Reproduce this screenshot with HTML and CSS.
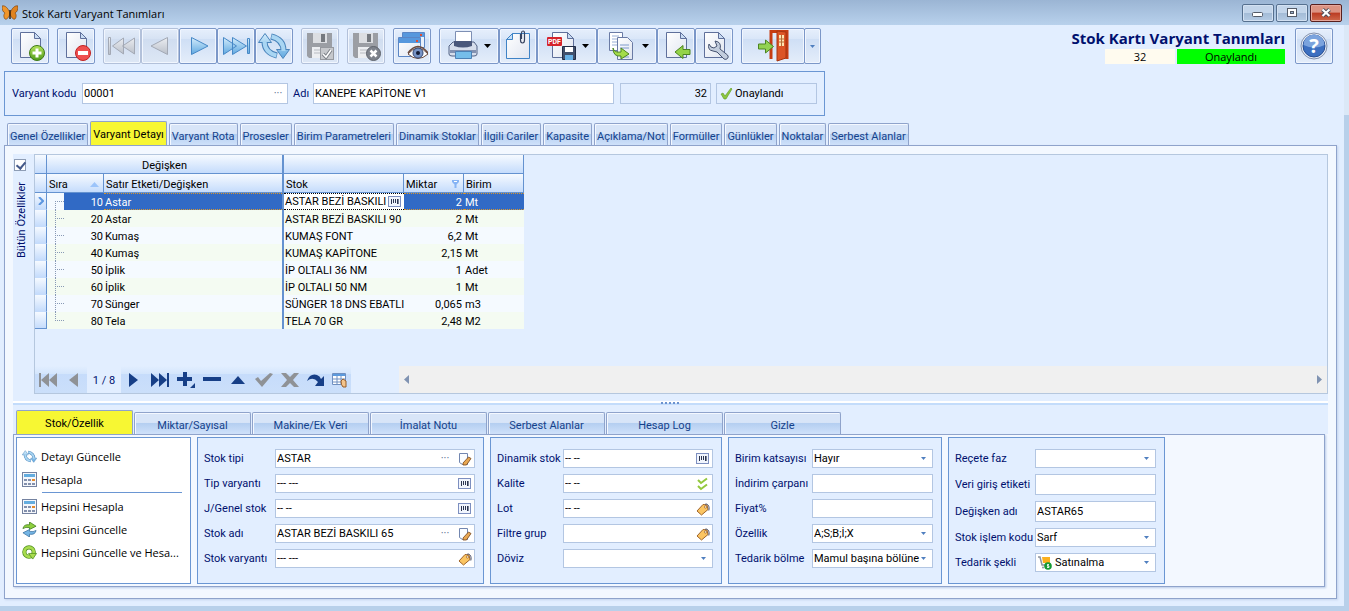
FILE: index.html
```html
<!DOCTYPE html>
<html lang="tr">
<head>
  <meta charset="UTF-8" />
  <meta name="viewport" content="width=device-width, initial-scale=1.0"/>
  <title>Stok Kartı Varyant Tanımları</title>
  <link rel="stylesheet" href="styles.css">
</head>
<body>
  <!-- shared icons -->
  <svg class="defs" aria-hidden="true">
    <defs>
      <linearGradient id="blue" x1="0" y1="0" x2="0" y2="1"><stop offset="0" stop-color="#d3ecfb"/><stop offset="1" stop-color="#5fa8e0"/></linearGradient>
      <linearGradient id="grey" x1="0" y1="0" x2="0" y2="1"><stop offset="0" stop-color="#eceef2"/><stop offset="1" stop-color="#b9bfc9"/></linearGradient>
      <linearGradient id="paper" x1="0" y1="0" x2="1" y2="1"><stop offset="0" stop-color="#fff"/><stop offset="1" stop-color="#dfe5f0"/></linearGradient>
      <linearGradient id="green" x1="0" y1="0" x2="0" y2="1"><stop offset="0" stop-color="#b5e55c"/><stop offset="1" stop-color="#4f9a1b"/></linearGradient>
    </defs>
    <symbol id="i-doc" viewBox="0 0 32 32"><path d="M6.500 2.500h14l6 6v19h-20z" fill="url(#paper)" stroke="#5f709b"/><path d="M20.500 2.500v6h6z" fill="#c9dcf3" stroke="#5f709b"/></symbol>
    <symbol id="i-floppy" viewBox="0 0 32 32"><path d="M3 3h25v25H5l-2-2z" fill="#9b9ea4"/><path d="M9 3h14v10H9z" fill="#dcdee2"/><path d="M17 4h4v8h-4z" fill="#75797f"/><path d="M8 17h16v11H8z" fill="#eceef1"/><path d="M10 20h11M10 23h11" stroke="#b8bbc1"/></symbol>
    <symbol id="i-bar" viewBox="0 0 14 12"><rect x=".5" y=".5" width="12" height="10" fill="#f1f5fd" stroke="#7d8fc0"/><path d="M3.500 3v5M5.500 3v4M7.500 3v4M9.500 3v5" stroke="#2c3550"/><path d="M10.500 3v5" stroke="#2c3550" stroke-width=".6"/></symbol>
    <symbol id="i-edit" viewBox="0 0 14 14"><path d="M1.500 1.500h8v11h-5l-3-2z" fill="#fbfdff" stroke="#7286b0"/><path d="M5 11l5.500-6 2.500 1.500-4.500 6.500H5z" fill="#e8a752" stroke="#744318" stroke-width=".8"/></symbol>
    <symbol id="i-tag" viewBox="0 0 14 14"><path d="M1 9l6-6.500 4 .5 1 4.500L5.500 13z" fill="#fbc562" stroke="#a0642a"/><circle cx="9.500" cy="5" r="1.100" fill="#fff" stroke="#8a4c12" stroke-width=".6"/><path d="M9 2.500c2-1.500 5 1 3.800 6" fill="none" stroke="#444b66"/></symbol>
    <symbol id="i-dd" viewBox="0 0 7 4"><path d="M0 0h7L3.500 4z" fill="currentColor"/></symbol>
    <symbol id="i-calc" viewBox="0 0 15 15"><rect x=".5" y=".5" width="14" height="14" fill="#f5f7fb" stroke="#7482a0"/><path d="M2 2h11v3H2z" fill="#64addf"/><path d="M2 7h3v2H2zM6 7h3v2H6zM2 11h3v2H2zM6 11h3v2H6zM10 11h3v2h-3z" fill="#8390ac"/><path d="M10 7h3v2h-3z" fill="#e58a2c"/></symbol>
    <symbol id="i-sync" viewBox="0 0 32 32">
      <path d="M6.500 11.500q0 11 12.500 14M25.500 20.500q0-11-12.500-14" fill="none" stroke="#4a84bb" stroke-width="6"/>
      <path d="M7 3.500L.5 12.500h13zM25 28.500l6.500-9h-13z" fill="url(#blue)" stroke="#4a84bb"/>
      <path d="M6.500 11q0 11.500 11.900 14.500M25.500 21q0-11.500-11.900-14.500" fill="none" stroke="#a9d6f3" stroke-width="4"/>
    </symbol>
  </svg>

  <header class="titlebar">
    <svg class="logo" viewBox="0 0 16 16"><path d="M8 8C6 3 3 0 0 1c0 4 1 6 3 7-2 2-1 5 0 6 2 1 4-2 5-5z" fill="#f0962c" stroke="#6d3609" stroke-width=".6"/><path d="M8 8c2-5 5-8 8-7 0 4-1 6-3 7 2 2 1 5 0 6-2 1-4-2-5-5z" fill="#e08320" stroke="#6d3609" stroke-width=".6"/><path d="M8 5v9" stroke="#3d2208" stroke-width="1.500"/></svg>
    <h1>Stok Kartı Varyant Tanımları</h1>
    <div class="winbtns">
      <button aria-label="Küçült"><svg viewBox="0 0 30 16"><rect x="9.500" y="7.500" width="10" height="4" rx="1" fill="#fff" stroke="#545b68"/></svg></button>
      <button aria-label="Büyüt"><svg viewBox="0 0 30 16"><rect x="10.500" y="3.500" width="9" height="8" fill="#fff" stroke="#545b68"/><rect x="13.500" y="6.500" width="3" height="2" fill="#9db3ce" stroke="#545b68"/></svg></button>
      <button class="close" aria-label="Kapat"><svg viewBox="0 0 30 16"><path d="M11.500 4.500l7 6.500m0-6.500l-7 6.500" stroke="#4c4e5b" stroke-width="4"/><path d="M11.500 4.500l7 6.500m0-6.500l-7 6.500" stroke="#fff" stroke-width="2.200"/></svg></button>
    </div>
  </header>

  <main class="window">
    <div class="toolbar">
      <div class="group"><button class="tool" aria-label="Yeni"><svg viewBox="0 0 32 32"><use href="#i-doc"/><circle cx="23" cy="23" r="7.500" fill="url(#green)" stroke="#3f7a16"/><path d="M23 18.500v9M18.500 23h9" stroke="#fff" stroke-width="3"/></svg></button></div>
      <div class="group"><button class="tool" aria-label="Sil"><svg viewBox="0 0 32 32"><use href="#i-doc"/><circle cx="23" cy="23" r="7.500" fill="#ef4f4f" stroke="#c02222"/><path d="M18 23h10" stroke="#fff" stroke-width="4"/></svg></button></div>
      <div class="group">
        <button class="tool off" aria-label="İlk"><svg viewBox="0 0 32 32"><path d="M2.500 7.500h2v17h-2zM17.500 8v16L6.500 16zM28.500 8v16l-12-8z" fill="url(#grey)" stroke="#a3a9b5"/></svg></button>
        <button class="tool off" aria-label="Önceki"><svg viewBox="0 0 32 32"><path d="M23.500 7.500v17L7 16z" fill="url(#grey)" stroke="#a3a9b5"/></svg></button>
        <button class="tool" aria-label="Sonraki"><svg viewBox="0 0 32 32"><path d="M9.500 7.500v17L26 16z" fill="url(#blue)" stroke="#4788c6"/></svg></button>
        <button class="tool" aria-label="Son"><svg viewBox="0 0 32 32"><path d="M3.500 7.500v17l13-8.500zM12.500 7.500v17l14-8.500zM27.500 8.500h2v15h-2z" fill="url(#blue)" stroke="#4788c6"/></svg></button>
        <button class="tool" aria-label="Yenile"><svg viewBox="0 0 32 32"><use href="#i-sync"/></svg></button>
      </div>
      <div class="group"><button class="tool off" aria-label="Kaydet"><svg viewBox="0 0 32 32"><use href="#i-floppy"/><rect x="16.500" y="17.500" width="13" height="12" fill="#c6c8cc" stroke="#96999f"/><path d="M19 24l3 3 5-7" fill="none" stroke="#7d8188" stroke-width="3.500"/><path d="M19 24l3 3 5-7" fill="none" stroke="#fff" stroke-width="1.500"/></svg></button></div>
      <div class="group"><button class="tool off" aria-label="Vazgeç"><svg viewBox="0 0 32 32"><use href="#i-floppy"/><circle cx="23.500" cy="23.500" r="7" fill="#7e838c" stroke="#5f646d"/><path d="M20.500 20.500l6 6m0-6l-6 6" stroke="#fff" stroke-width="2.500"/></svg></button></div>
      <div class="group"><button class="tool" aria-label="Görünüm"><svg viewBox="0 0 32 32"><path d="M6.500 2.500h22v15h-22z" fill="#e9f0fa" stroke="#5b86c5"/><path d="M7 3h21v4H7z" fill="#5798dd"/><path d="M2.500 7.500h22v19h-22z" fill="url(#paper)" stroke="#5b86c5"/><path d="M3 8h21v5H3z" fill="#5798dd"/><path d="M24 4h2v2h-2zM20 10h2v2h-2z" fill="#e54c2c"/><path d="M12 24q10-12 20 0-10 9-20 0z" fill="#fff" stroke="#6b4b3f"/><circle cx="22" cy="23" r="5" fill="#7793c5" stroke="#344873"/><circle cx="22" cy="23" r="2" fill="#131b34"/><path d="M12 23q10-13 20 0" fill="none" stroke="#6b4b3f" stroke-width="1.500"/></svg></button></div>
      <div class="group">
        <button class="tool wide" aria-label="Yazdır"><svg viewBox="0 0 32 32"><path d="M8.500 1.500h16v12h-16z" fill="#fff" stroke="#7d8fb4"/><path d="M6 12h21l3 4v8q0 2-3 2H5q-3 0-3-2v-8z" fill="#d6deec" stroke="#536385"/><path d="M7 11h18v5q-9 3-18 0z" fill="#4a587b"/><path d="M3 20h26v3H3z" fill="#8291b1"/><path d="M8.500 21.500h16v7h-16z" fill="#75bdea" stroke="#4b81b6"/></svg><svg class="caret"><use href="#i-dd"/></svg></button>
        <button class="tool" aria-label="Ekle"><svg viewBox="0 0 32 32"><path d="M10.500 3.500h17v25h-23v-19z" fill="url(#paper)" stroke="#3f83c6"/><path d="M10.500 3.500v6h-6z" fill="#c4def5" stroke="#3f83c6"/><path d="M18.500 4v6q0 3 2 3t2-3V3q0-2-1.500-2t-1.500 2v6" fill="none" stroke="#36435f" stroke-width="1.200"/></svg></button>
        <button class="tool wide" aria-label="PDF kaydet"><svg viewBox="0 0 32 32"><path d="M7.500 2.500h15l6 6v19h-21z" fill="url(#paper)" stroke="#5f709b"/><path d="M22.500 2.500v6h6z" fill="#c9dcf3" stroke="#5f709b"/><rect x="2" y="7" width="15" height="9" rx="1" fill="#d5232b"/><text x="3" y="14" class="pdf">PDF</text><path d="M17.500 16.500h13v13h-13z" fill="#41506c" stroke="#202c46"/><path d="M20 17h8v5h-8z" fill="#fff"/><path d="M20 25h8v5h-8z" fill="#67b1e6"/></svg><svg class="caret"><use href="#i-dd"/></svg></button>
        <button class="tool wide" aria-label="Aktar"><svg viewBox="0 0 32 32"><path d="M4.500 2.500h13v18h-13z" fill="#fff" stroke="#6a7ba5"/><path d="M7 6h7M7 9h7M7 12h7M7 15h7" stroke="#9ab0d6"/><path d="M12.500 7.500h10l5 5v17h-15z" fill="url(#paper)" stroke="#6a7ba5"/><path d="M15 15h9M15 18h9M15 27h9" stroke="#7f9acb"/><path d="M8 18q1 5 8 4v-4l8 6-8 5v-3Q8 27 8 18z" fill="#a4dc4a" stroke="#4c8521"/></svg><svg class="caret"><use href="#i-dd"/></svg></button>
        <button class="tool" aria-label="Geri al"><svg viewBox="0 0 32 32"><use href="#i-doc"/><path d="M15 22l8-6.500v4h7v5h-7v4z" fill="#94d348" stroke="#4c8521"/></svg></button>
        <button class="tool" aria-label="Ayarlar"><svg viewBox="0 0 32 32"><use href="#i-doc"/><path d="M11 14q-2 6 4 7l4 1 7 7q2 1 3.500-.5t0-3.500L22 19q2-7-5-8l2 5-3 2-3-1z" fill="#c2cddd" stroke="#45526f"/></svg></button>
      </div>
      <div class="group">
        <button class="tool exit" aria-label="Çıkış"><svg viewBox="0 0 32 32"><path d="M14 29V1.500h16V29" fill="none" stroke="#c63c12" stroke-width="3"/><path d="M20 1l9 1v26l-9 3z" fill="#dc5425" stroke="#a63410"/><path d="M22 5h5v11h-5z" fill="#ffe3b0"/><path d="M22 9h5M22 12h5M24.500 5v11" stroke="#b46a35"/><path d="M1.500 14h7v-4l8 6.500-8 6.500v-4h-7z" fill="#92d252" stroke="#4c8521"/></svg></button>
        <button class="tool slim" aria-label="Çıkış seçenekleri"><svg class="caret blue"><use href="#i-dd"/></svg></button>
      </div>
      <div class="heading">
        <h2>Stok Kartı Varyant Tanımları</h2>
        <div class="status"><span class="num">32</span><span class="ok">Onaylandı</span></div>
      </div>
      <button class="tool" aria-label="Yardım"><svg viewBox="0 0 32 32"><circle cx="16" cy="16" r="13" fill="#e8edf5" stroke="#8291ad"/><circle cx="16" cy="16" r="11" fill="#3c6fc0" stroke="#264d92"/><path d="M5.500 15a10.500 10.500 0 0 1 21 0q-10 5-21 0z" fill="#7ba3dd"/><text x="16" y="23" class="q">?</text></svg></button>
    </div>

    <form class="head-panel">
      <label for="kod">Varyant kodu</label>
      <div class="field kod"><input id="kod" value="00001"><button type="button" class="dots">···</button></div>
      <label for="adi">Adı</label>
      <div class="field adi"><input id="adi" value="KANEPE KAPİTONE V1"></div>
      <div class="field ro no"><input aria-label="No" value="32" readonly></div>
      <div class="field ro durum"><svg viewBox="0 0 13 13"><path d="M1 7l2-1 2 3 6-8 1 1-6 10H4z" fill="#8cc63f" stroke="#5c9a23" stroke-width=".6"/></svg><input aria-label="Durum" value="Onaylandı" readonly></div>
    </form>

    <nav class="tabs top">
      <a href="#">Genel Özellikler</a><a href="#" class="active">Varyant Detayı</a><a href="#">Varyant Rota</a><a href="#">Prosesler</a><a href="#">Birim Parametreleri</a><a href="#">Dinamik Stoklar</a><a href="#">İlgili Cariler</a><a href="#">Kapasite</a><a href="#">Açıklama/Not</a><a href="#">Formüller</a><a href="#">Günlükler</a><a href="#">Noktalar</a><a href="#">Serbest Alanlar</a>
    </nav>

    <section class="page">
      <div class="upper">
        <div class="side">
          <input type="checkbox" id="all" checked>
          <label for="all">Bütün Özellikler</label>
        </div>
        <div class="grid">
          <table>
            <colgroup><col class="c-ind"><col class="c-sira"><col class="c-satir"><col class="c-stok"><col class="c-miktar"><col class="c-birim"></colgroup>
            <thead>
              <tr><th></th><th colspan="2" class="band split">Değişken</th><th colspan="3"></th></tr>
              <tr><th></th><th><span class="th">Sıra<svg class="sort" viewBox="0 0 9 5"><path d="M0 5l4.500-5L9 5z" fill="#9cc4fa"/></svg></span></th><th class="split">Satır Etketi/Değişken</th><th>Stok</th><th><span class="th">Miktar<svg class="funnel" viewBox="0 0 7 8"><path d="M0 0h7v2L4.500 4.500V8h-2V4.500L0 2z" fill="#86b4f5"/><path d="M2 1.500h3" stroke="#fff"/></svg></span></th><th>Birim</th></tr>
            </thead>
            <tbody>
              <tr class="sel"><th class="ind"><svg viewBox="0 0 6 8"><path d="M1 0l4 4-4 4" fill="none" stroke="#5c96e0" stroke-width="2"/></svg></th><td><div class="seq"><i></i><b>10</b></div></td><td class="split">Astar</td><td class="edit"><div class="cell">ASTAR BEZİ BASKILI<svg class="bar"><use href="#i-bar"/></svg></div></td><td class="n">2</td><td>Mt</td></tr>
              <tr><th class="ind"></th><td><div class="seq"><i></i><b>20</b></div></td><td class="split">Astar</td><td>ASTAR BEZİ BASKILI 90</td><td class="n">2</td><td>Mt</td></tr>
              <tr><th class="ind"></th><td><div class="seq"><i></i><b>30</b></div></td><td class="split">Kumaş</td><td>KUMAŞ FONT</td><td class="n">6,2</td><td>Mt</td></tr>
              <tr><th class="ind"></th><td><div class="seq"><i></i><b>40</b></div></td><td class="split">Kumaş</td><td>KUMAŞ KAPİTONE</td><td class="n">2,15</td><td>Mt</td></tr>
              <tr><th class="ind"></th><td><div class="seq"><i></i><b>50</b></div></td><td class="split">İplik</td><td>İP OLTALI 36 NM</td><td class="n">1</td><td>Adet</td></tr>
              <tr><th class="ind"></th><td><div class="seq"><i></i><b>60</b></div></td><td class="split">İplik</td><td>İP OLTALI 50 NM</td><td class="n">1</td><td>Mt</td></tr>
              <tr><th class="ind"></th><td><div class="seq"><i></i><b>70</b></div></td><td class="split">Sünger</td><td>SÜNGER 18 DNS EBATLI</td><td class="n">0,065</td><td>m3</td></tr>
              <tr class="last"><th class="ind"></th><td><div class="seq"><i></i><b>80</b></div></td><td class="split">Tela</td><td>TELA 70 GR</td><td class="n">2,48</td><td>M2</td></tr>
            </tbody>
          </table>
          <div class="grid-foot">
            <div class="navi off">
              <button aria-label="İlk kayıt"><svg viewBox="0 0 20 16"><path d="M1 1h2v14H1zM11 1v14L3 8zM19 1v14l-8-7z"/></svg></button>
              <button aria-label="Önceki kayıt"><svg viewBox="0 0 20 16"><path d="M14 1v14L5 8z"/></svg></button>
            </div>
            <span class="count">1 / 8</span>
            <div class="navi">
              <button aria-label="Sonraki kayıt"><svg viewBox="0 0 20 16"><path d="M5 1v14l9-7z"/></svg></button>
              <button aria-label="Son kayıt"><svg viewBox="0 0 20 16"><path d="M1 1v14l8-7zM9 1v14l8-7zM17 1h2v14h-2z"/></svg></button>
              <button aria-label="Ekle"><svg viewBox="0 0 20 16"><path d="M7 0h4v5h5v4h-5v5H7V9H1V5h6zM19 11v5h-5z"/></svg></button>
              <button aria-label="Çıkar"><svg viewBox="0 0 20 16"><path d="M1 5h18v4H1z"/></svg></button>
              <button aria-label="Düzenle"><svg viewBox="0 0 20 16"><path d="M3 12l7-8 7 8z"/></svg></button>
              <button class="dim" aria-label="Onayla"><svg viewBox="0 0 20 16"><path d="M1 7l3-2 3 4 9-8 3 1L8 15z"/></svg></button>
              <button class="dim" aria-label="İptal"><svg viewBox="0 0 20 16"><path d="M1 1h5l4 4 4-4h5l-6 7 6 7h-5l-4-4-4 4H1l6-7z"/></svg></button>
              <button aria-label="Tazele"><svg viewBox="0 0 20 16"><path d="M1 9q3-8 10-6 3 1 4 4l3-3v10H9l3-4Q7 4 1 9z"/></svg></button>
              <button class="table-btn" aria-label="Tablo"><svg viewBox="0 0 20 16"><path d="M2.500 1.500h13v11h-13z" fill="#fff" stroke="#6f8fc0"/><path d="M3 2h12v2H3z" fill="#5c9add"/><path d="M3 7h12M3 10h12M7 4v8M11 4v8" stroke="#6f8fc0"/><path d="M11 9l2-2 3 2v6h-3q-2-2-2-6z" fill="#f3c48c" stroke="#965c29"/></svg></button>
            </div>
            <div class="scroll"><svg viewBox="0 0 5 9"><path d="M5 0v9L0 4.500z" fill="#8093b2"/></svg><svg viewBox="0 0 5 9"><path d="M0 0v9l5-4.500z" fill="#8093b2"/></svg></div>
          </div>
        </div>
      </div>

      <div class="splitter"><span></span></div>

      <nav class="tabs sub">
        <a href="#" class="active">Stok/Özellik</a><a href="#">Miktar/Sayısal</a><a href="#">Makine/Ek Veri</a><a href="#">İmalat Notu</a><a href="#">Serbest Alanlar</a><a href="#">Hesap Log</a><a href="#">Gizle</a>
      </nav>

      <div class="detail">
        <ul class="actions">
          <li><a href="#"><svg viewBox="0 0 32 32"><use href="#i-sync"/></svg><span>Detayı Güncelle</span></a></li>
          <li><a href="#"><svg><use href="#i-calc"/></svg><span>Hesapla</span></a></li>
          <li class="sep"></li>
          <li><a href="#"><svg><use href="#i-calc"/></svg><span>Hepsini Hesapla</span></a></li>
          <li><a href="#"><svg viewBox="0 0 16 16"><path d="M1 7q1-5 7-4V0l7 4.500L8 8V6Q4 5 1 7z" fill="#8ecf3e" stroke="#3e7a18" stroke-width=".8"/><path d="M15 9q-1 5-7 4v3l-7-4.500L8 8v2q4 1 7-1z" fill="#74b5e5" stroke="#39709f" stroke-width=".8"/></svg><span>Hepsini Güncelle</span></a></li>
          <li><a href="#"><svg viewBox="0 0 16 16"><circle cx="7.500" cy="7.500" r="5" fill="none" stroke="#4f8f1d" stroke-width="4.500"/><circle cx="7.500" cy="7.500" r="5" fill="none" stroke="#a9dc4f" stroke-width="3"/><path d="M7 9h8.500l-4 6z" fill="#a9dc4f" stroke="#4f8f1d" stroke-width=".8"/></svg><span>Hepsini Güncelle ve Hesa...</span></a></li>
        </ul>

        <form class="box b1">
          <label for="f1">Stok tipi</label><div class="field"><input id="f1" value="ASTAR"><button type="button" class="dots">···</button><svg class="edit-i"><use href="#i-edit"/></svg></div>
          <label for="f2">Tip varyantı</label><div class="field"><input id="f2" value="--- ---"><svg class="bar"><use href="#i-bar"/></svg></div>
          <label for="f3">J/Genel stok</label><div class="field"><input id="f3" value="-- --"><svg class="bar"><use href="#i-bar"/></svg></div>
          <label for="f4">Stok adı</label><div class="field"><input id="f4" value="ASTAR BEZİ BASKILI 65"><button type="button" class="dots">···</button><svg class="edit-i"><use href="#i-edit"/></svg></div>
          <label for="f5">Stok varyantı</label><div class="field"><input id="f5" value="--- ---"><svg class="edit-i"><use href="#i-tag"/></svg></div>
        </form>

        <form class="box b2">
          <label for="g1">Dinamik stok</label><div class="field"><input id="g1" value="-- --"><svg class="bar"><use href="#i-bar"/></svg></div>
          <label for="g2">Kalite</label><div class="field"><input id="g2" value="-- --"><svg class="edit-i" viewBox="0 0 14 14"><path d="M2 3l3 3 6-4.500M2 9l3 3 6-4.500" fill="none" stroke="#93c83d" stroke-width="2"/></svg></div>
          <label for="g3">Lot</label><div class="field"><input id="g3" value="-- --"><svg class="edit-i"><use href="#i-tag"/></svg></div>
          <label for="g4">Filtre grup</label><div class="field"><input id="g4"><svg class="edit-i"><use href="#i-tag"/></svg></div>
          <label for="g5">Döviz</label><div class="field"><select id="g5"><option></option></select><svg class="dd"><use href="#i-dd"/></svg></div>
        </form>

        <form class="box b3">
          <label for="h1">Birim katsayısı</label><div class="field"><select id="h1"><option>Hayır</option></select><svg class="dd"><use href="#i-dd"/></svg></div>
          <label for="h2">İndirim çarpanı</label><div class="field"><input id="h2"></div>
          <label for="h3">Fiyat%</label><div class="field"><input id="h3"></div>
          <label for="h4">Özellik</label><div class="field"><select id="h4"><option>A;S;B;İ;X</option></select><svg class="dd"><use href="#i-dd"/></svg></div>
          <label for="h5">Tedarik bölme</label><div class="field"><select id="h5"><option>Mamul başına bölüne</option></select><svg class="dd"><use href="#i-dd"/></svg></div>
        </form>

        <form class="box b4">
          <label for="k1">Reçete faz</label><div class="field"><select id="k1"><option></option></select><svg class="dd"><use href="#i-dd"/></svg></div>
          <label for="k2">Veri giriş etiketi</label><div class="field tall"><input id="k2"></div>
          <label for="k3">Değişken adı</label><div class="field tall"><input id="k3" value="ASTAR65"></div>
          <label for="k4">Stok işlem kodu</label><div class="field"><select id="k4"><option>Sarf</option></select><svg class="dd"><use href="#i-dd"/></svg></div>
          <label for="k5">Tedarik şekli</label><div class="field"><svg class="cart" viewBox="0 0 14 14"><path d="M0 1h2l2 8h5" fill="none" stroke="#8d939d" stroke-width="1.500"/><path d="M4 1h8v6H5z" fill="#fbb01e"/><circle cx="5" cy="11.500" r="1" fill="#8d939d"/><circle cx="10" cy="10" r="3.800" fill="#169a35"/><path d="M11 8.500H9.500v1.500H11v1.500H9M10 8v4" fill="none" stroke="#fff" stroke-width=".8"/></svg><select id="k5"><option>Satınalma</option></select><svg class="dd"><use href="#i-dd"/></svg></div>
        </form>
      </div>
    </section>
  </main>
</body>
</html>
```
FILE: styles.css
```css
* {
  box-sizing: border-box;
}

body {
  margin: 0;
  min-height: 100vh;
  display: flex;
  flex-direction: column;
  padding: 0 5px 5px 0;
  background: linear-gradient(#dbe8f7 115px, #b8d0ea 115px);
  font-family: Roboto, "Liberation Sans", sans-serif;
  font-size: 11px;
  line-height: 13px;
  color: #000;
}

button, input, select {
  font: inherit;
  color: inherit;
  margin: 0;
  padding: 0;
  border: none;
  background: none;
}

a {
  color: inherit;
  text-decoration: none;
}

.defs {
  position: absolute;
  width: 0;
  height: 0;
}

/* title bar */
.titlebar {
  display: flex;
  align-items: center;
  gap: 4px;
  height: 25px;
  margin-right: -5px;
  padding: 0 7px 0 2px;
  background: linear-gradient(#9bb5d4, #b8d1ec);
}

.logo {
  width: 16px;
  height: 16px;
}

.titlebar h1 {
  margin: 2px 0 0;
  font: 11px "Open Sans", sans-serif;
}

.winbtns {
  display: flex;
  gap: 2px;
  margin-left: auto;
}

.winbtns button {
  width: 32px;
  height: 18px;
  border: 1px solid #56708f;
  border-radius: 2px;
  box-shadow: inset 0 0 0 1px #d3e1f2;
  background: linear-gradient(#c3d5ea 50%, #a3bbd6 50%, #b5cbe4);
}

.winbtns svg {
  display: block;
  width: 30px;
  height: 16px;
}

.winbtns .close {
  border-color: #571f1e;
  box-shadow: inset 0 0 0 1px #e6a79c;
  background: linear-gradient(#dc9382 45%, #bb3b22 50%, #cf6a4c);
}

.window {
  flex: 1;
  display: flex;
  flex-direction: column;
  background: #e2eeff;
}

/* toolbar */
.toolbar {
  display: flex;
  gap: 8px;
  padding: 3px 11px 0;
}

.group {
  display: flex;
}

.tool {
  display: flex;
  align-items: center;
  justify-content: center;
  width: 38px;
  height: 36px;
  border: 1px solid #7b97c8;
  border-radius: 2px;
  box-shadow: inset 0 0 0 1px #f1f6fe;
  background: linear-gradient(#e6effc, #d9e6f8 30%, #cfdff5 30%, #e4edfa);
}

.tool svg {
  width: 32px;
  height: 32px;
}

.tool.off {
  border-color: #b3c1da;
  background: linear-gradient(#e3ecf9, #d6e2f3 30%, #d0ddf0 30%, #dde7f5);
}

.tool.wide {
  width: 60px;
  gap: 5px;
}

.tool.exit {
  width: 64px;
}

.tool.slim {
  width: 17px;
  margin-left: -1px;
}

.tool .caret {
  width: 7px;
  height: 4px;
}

.caret.blue {
  color: #4f7fbf;
}

.tool.slim .caret {
  width: 5px;
  height: 3px;
}

.pdf {
  font: bold 7px Roboto, sans-serif;
  fill: #fff;
}

.q {
  font: bold 20px "Open Sans", sans-serif;
  text-anchor: middle;
  fill: #fff;
}

.heading {
  margin-left: auto;
  margin-right: 2px;
}

.heading h2 {
  margin: 0;
  font: bold 15px/21px "Open Sans", sans-serif;
  color: #00106e;
  text-align: right;
}

.status {
  display: flex;
  justify-content: flex-end;
  gap: 2px;
  font: 11px/15px "Open Sans", sans-serif;
  text-align: center;
}

.num {
  width: 70px;
  background: #fffbef;
}

.ok {
  width: 108px;
  background: #00ff00;
}

/* record header */
.head-panel {
  display: flex;
  align-items: center;
  align-self: flex-start;
  margin: 7px 0 6px 4px;
  padding: 0 7px;
  height: 45px;
  border: 1px solid #6a96d3;
}

label {
  color: #00106e;
  white-space: nowrap;
}

.field {
  display: flex;
  align-items: center;
  height: 19px;
  padding-right: 2px;
  border: 1px solid #b3c6e2;
  background: #fff;
}

.field input,
.field select {
  flex: 1;
  min-width: 0;
  width: 0;
  height: 100%;
  padding: 0 1px;
  outline: none;
}

.field select {
  appearance: none;
}

.field svg {
  flex: none;
}

.head-panel label {
  width: 70px;
}

.head-panel label + .kod + label {
  width: 20px;
  margin-left: 5px;
}

.head-panel .field {
  height: 21px;
}

.kod {
  width: 206px;
}

.adi {
  width: 301px;
}

.field.ro {
  margin-left: 6px;
  background: #e2eeff;
}

.no {
  width: 91px;
}

.no input {
  text-align: right;
}

.field.durum {
  width: 101px;
  margin-left: 5px;
  gap: 1px;
}

.durum svg {
  width: 13px;
  height: 13px;
  margin-left: 3px;
}

.dots {
  width: 14px;
  color: #55688c;
}

/* tabs */
.tabs {
  display: flex;
  align-items: flex-end;
  gap: 1px;
  height: 23px;
  position: relative;
  color: #15428b;
}

.tabs a {
  height: 22px;
  padding: 6px 2px 0;
  border: 1px solid #8fa3cb;
  border-bottom: none;
  border-radius: 2px 2px 0 0;
  box-shadow: inset 1px 1px 0 #f4f8ff;
  background: linear-gradient(#d8e5f8 45%, #b5cff1 50%, #cfe1fa);
  text-align: center;
  white-space: nowrap;
}

.tabs a.active {
  height: 24px;
  background: #f7f733;
  box-shadow: none;
  color: #000;
}

.tabs.top {
  gap: 2px;
  margin-left: 7px;
}

.tabs.sub {
  margin-left: 3px;
}

.tabs.sub a {
  width: 117px;
}

/* main page */
.page {
  flex: 1;
  display: flex;
  flex-direction: column;
  margin: 0 7px 7px 4px;
  padding: 8px 8px 11px;
  border: 1px solid #8fa3cb;
  background: #f3f8ff;
  box-shadow: 1px 1px 2px #c3d3ec;
}

.upper {
  flex: 1;
  display: flex;
  min-height: 0;
  background: #e2eeff;
}

.side {
  width: 21px;
  padding-top: 5px;
}

.side input {
  appearance: none;
  display: block;
  width: 12px;
  height: 12px;
  margin-left: 1px;
  border: 1px solid #8e9db5;
  background: #fff;
}

.side input:checked::before {
  content: "";
  display: block;
  width: 4px;
  height: 7px;
  margin: 0 0 0 3px;
  border: solid #44598a;
  border-width: 0 2px 2px 0;
  transform: rotate(40deg);
}

.side label {
  display: block;
  margin: 11px 0 0 2px;
  writing-mode: vertical-rl;
  rotate: 180deg;
}

.grid {
  flex: 1;
  display: flex;
  flex-direction: column;
  border: 1px solid #b5c7de;
}

table {
  width: 489px;
  table-layout: fixed;
  border-collapse: separate;
  border-spacing: 0;
}

.c-ind { width: 12px; }
.c-sira { width: 57px; }
.c-satir { width: 180px; }
.c-stok { width: 120px; }
.c-miktar { width: 60px; }
.c-birim { width: 60px; }

th {
  padding: 2px 2px 0;
  font-weight: normal;
  text-align: left;
  border: solid #6492d0;
  border-width: 0 1px 1px 0;
  background: linear-gradient(#f6faff, #c5dcfc);
}

thead th {
  height: 19px;
}

thead .band {
  text-align: center;
}

.th {
  display: flex;
  align-items: center;
  justify-content: space-between;
  padding-right: 2px;
}

.sort {
  width: 9px;
  height: 5px;
}

.funnel {
  width: 7px;
  height: 8px;
}

td {
  height: 17px;
  padding: 2px 2px 0 1px;
  white-space: nowrap;
  background: #f5faff;
}

tbody tr:nth-child(even) td {
  background: #f4fbf2;
}

th.ind {
  padding: 0 3px;
  border-bottom-color: #c5dcfc;
}

.last th.ind {
  border-bottom-color: #6492d0;
}

.ind svg {
  display: block;
  width: 6px;
  height: 8px;
}

.split {
  border-right: 2px solid #6492d0;
}

td:nth-child(2) {
  padding: 0 1px 0 0;
}

.seq {
  display: flex;
  justify-content: space-between;
  height: 17px;
  padding-left: 8px;
}

.seq b {
  padding-top: 3px;
  font-weight: normal;
}

.seq i {
  width: 9px;
  height: 17px;
  background:
    repeating-linear-gradient(90deg, #8899b5 0 1px, transparent 1px 2px) 0 8px / 9px 1px no-repeat,
    repeating-linear-gradient(#8899b5 0 1px, transparent 1px 2px) 0 0 / 1px 100% no-repeat;
}

.sel .seq i {
  background-position: 0 8px, 0 8px;
}

.last .seq i {
  background-size: 9px 1px, 1px 8px;
}

.sel td {
  padding-top: 1px;
  background: #316ac5;
  color: #fff;
  border: dotted #d9962c;
  border-width: 1px 0;
}

.sel td.split {
  border-right: 2px solid #6492d0;
}

.sel td:nth-child(2) {
  padding-top: 0;
  border-width: 0;
  background: linear-gradient(90deg, #f5faff 17px, #316ac5 17px);
}

.sel td.edit {
  padding-top: 0;
  background: #fff;
  border-color: #000;
  color: #000;
}

.cell {
  display: flex;
  align-items: center;
  justify-content: space-between;
  height: 15px;
  line-height: 16px;
}

.bar {
  width: 14px;
  height: 12px;
}

td.n {
  text-align: right;
}

.grid-foot {
  display: flex;
  height: 27px;
  margin-top: auto;
}

.navi {
  display: flex;
  align-items: center;
  background: linear-gradient(#e2eeff, #d3e5fc 30%, #c6dcfb 30%, #cbdffa);
}

.navi button {
  width: 26px;
  height: 27px;
}

.navi svg {
  display: block;
  width: 20px;
  height: 16px;
  margin: 0 auto;
  fill: #173f87;
}

.navi.off svg,
.navi .dim svg {
  fill: #8f9296;
}

.navi .table-btn {
  width: 22px;
}

.count {
  width: 34px;
  line-height: 29px;
  text-align: center;
  color: #00106e;
}

.scroll {
  flex: 1;
  display: flex;
  align-items: center;
  justify-content: space-between;
  margin-left: 48px;
  padding: 0 5px;
  background: #f0f0f0;
}

.scroll svg {
  width: 5px;
  height: 9px;
}

.splitter {
  height: 17px;
  display: flex;
  justify-content: center;
  background: linear-gradient(#e2eeff 7px, #fff 7px 9px, #c3dcfb 9px 11px, #e2eeff 11px);
}

.splitter span {
  width: 19px;
  height: 2px;
  margin-top: 8px;
  background: repeating-linear-gradient(90deg, #6c93cf 0 2px, transparent 2px 4px);
}

.tabs.sub::before {
  content: "";
  position: absolute;
  inset: 0 0 0 -3px;
  background: #e2eeff;
}

.tabs.sub a {
  position: relative;
}

/* detail */
.detail {
  display: flex;
  gap: 6px;
  margin-right: 3px;
  padding: 2px;
  border: 1px solid #8fa3cb;
  box-shadow: 1px 1px 2px #b9cbe8;
}

.actions {
  width: 175px;
  margin: 0;
  padding: 7px 5px;
  list-style: none;
  border: 1px solid #6a96d3;
  background: #fff;
  font: 11px/23px "Open Sans", sans-serif;
}

.actions a {
  display: flex;
  align-items: center;
  gap: 4px;
}

.actions svg {
  flex: none;
  width: 15px;
  height: 15px;
}

.actions span {
  overflow: hidden;
  text-overflow: ellipsis;
  white-space: nowrap;
}

.actions .sep {
  height: 1px;
  margin: 1px 3px 2px 20px;
  background: #6a96d3;
}

.box {
  display: grid;
  grid-template-columns: 71px 1fr;
  grid-auto-rows: min-content;
  row-gap: 6px;
  align-items: center;
  height: 147px;
  padding: 11px 8px 0 6px;
  border: 1px solid #6a96d3;
  background: #e2eeff;
}

.b1 { width: 287px; }

.b2 {
  width: 232px;
  grid-template-columns: 66px 1fr;
}

.b3 {
  width: 214px;
  grid-template-columns: 77px 1fr;
}

.b4 {
  width: 217px;
  grid-template-columns: 80px 1fr;
}

.field.tall {
  height: 21px;
}

.edit-i {
  width: 14px;
  height: 14px;
  margin-left: 6px;
}

.dd {
  width: 5px;
  height: 3px;
  margin-right: 4px;
  color: #4f7fbf;
}

.cart {
  width: 14px;
  height: 14px;
  margin: 0 2px;
}
```
